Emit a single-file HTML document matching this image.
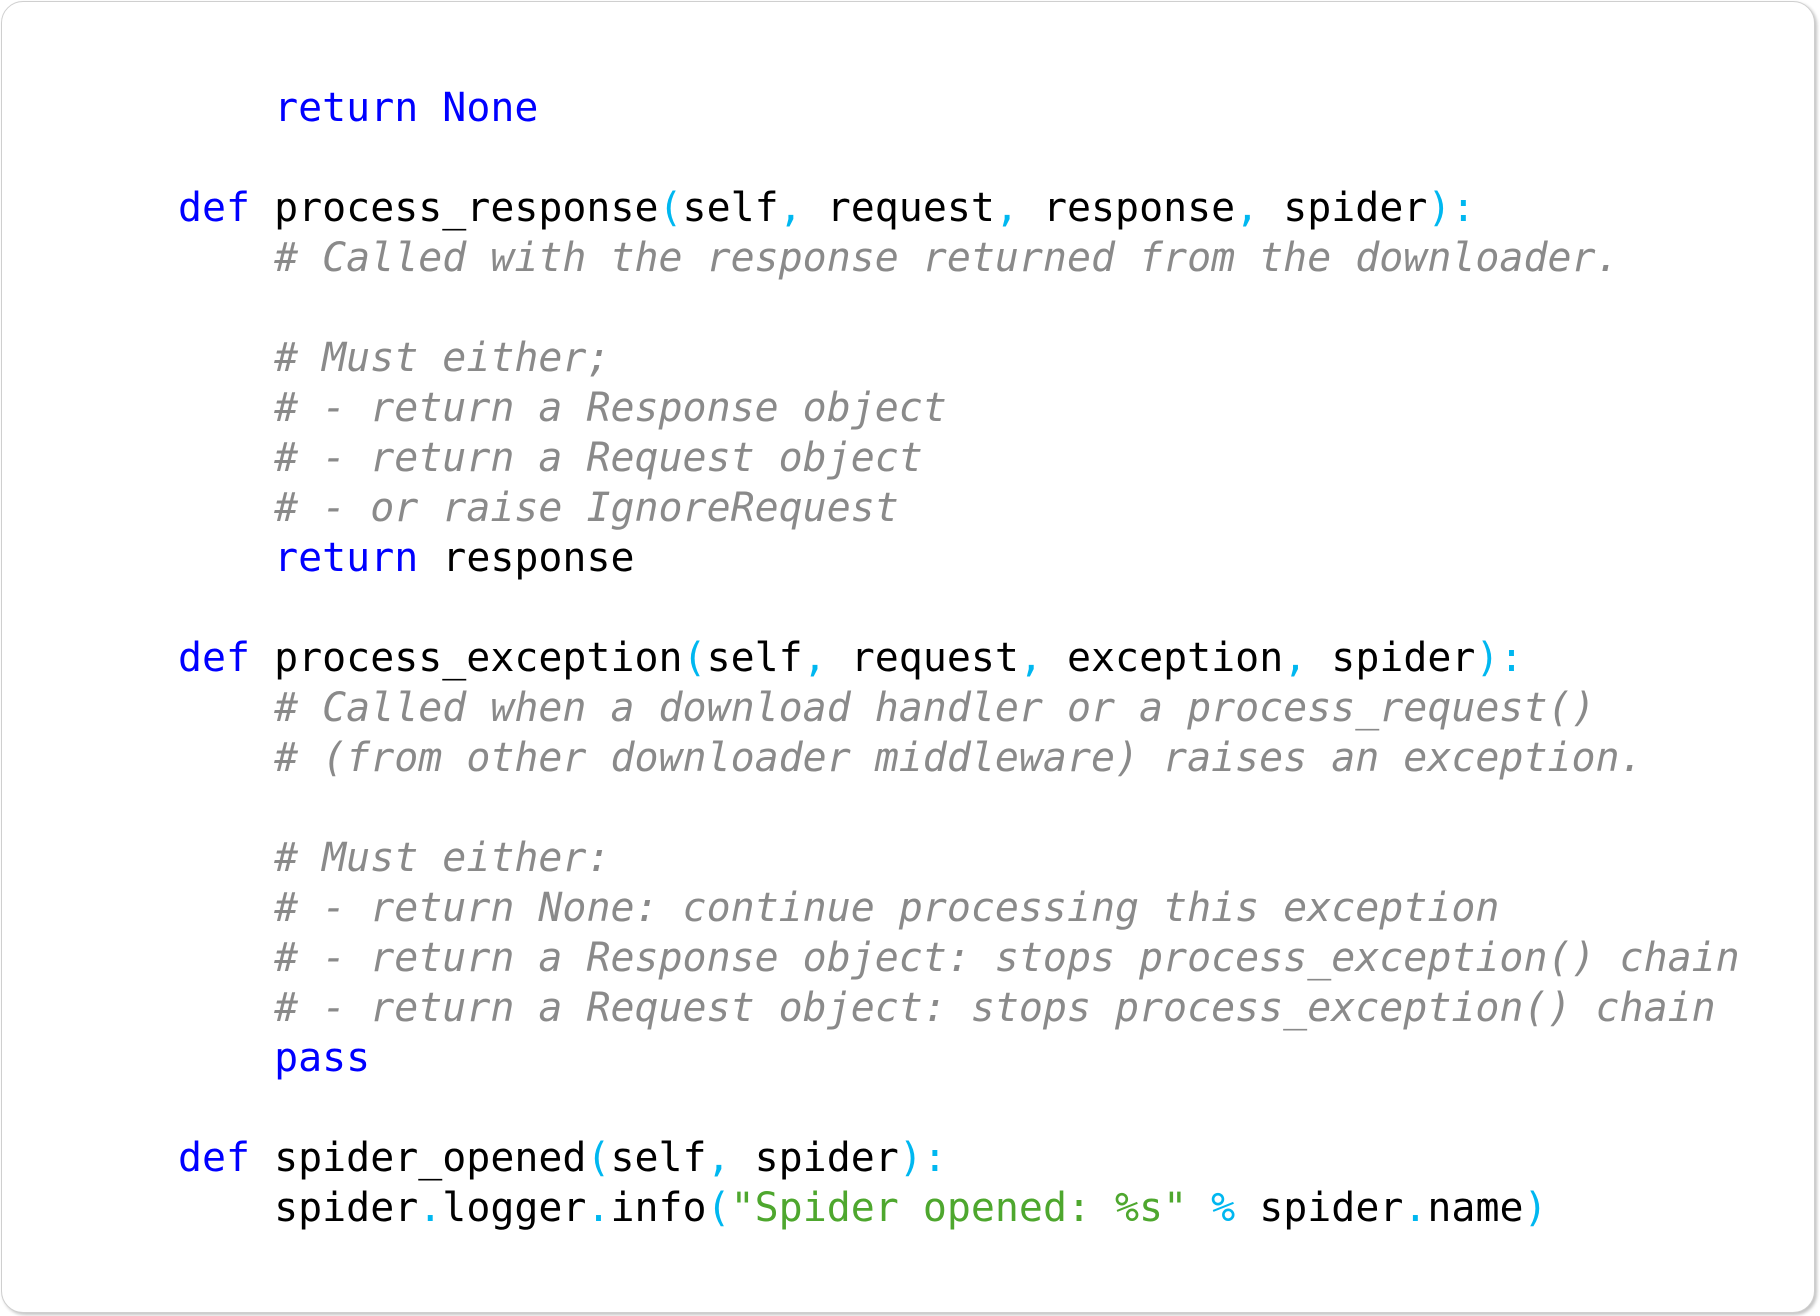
<!DOCTYPE html>
<html><head><meta charset="utf-8"><style>
html,body{margin:0;padding:0;background:#fff;}
body{width:1820px;height:1316px;position:relative;overflow:hidden;}
.card{position:absolute;left:1px;top:1px;width:1812px;height:1310px;border:1px solid #cfcfcf;border-radius:22px;box-shadow:2px 2px 3px #c4c4c4;background:#fff;}
pre{position:absolute;left:178px;top:83px;margin:0;font-family:"DejaVu Sans Mono","Liberation Mono",monospace;font-size:39.92px;line-height:50px;color:#000;}
.k{color:#0000ff}.p{color:#00b7f0}.c{color:#8a8a8a;font-style:italic}.s{color:#4ea72e}
</style></head><body><div class="card"></div>
<pre>    <span class="k">return</span> <span class="k">None</span>

<span class="k">def</span> process_response<span class="p">(</span>self<span class="p">,</span> request<span class="p">,</span> response<span class="p">,</span> spider<span class="p">):</span>
    <span class="c"># Called with the response returned from the downloader.</span>

    <span class="c"># Must either;</span>
    <span class="c"># - return a Response object</span>
    <span class="c"># - return a Request object</span>
    <span class="c"># - or raise IgnoreRequest</span>
    <span class="k">return</span> response

<span class="k">def</span> process_exception<span class="p">(</span>self<span class="p">,</span> request<span class="p">,</span> exception<span class="p">,</span> spider<span class="p">):</span>
    <span class="c"># Called when a download handler or a process_request()</span>
    <span class="c"># (from other downloader middleware) raises an exception.</span>

    <span class="c"># Must either:</span>
    <span class="c"># - return None: continue processing this exception</span>
    <span class="c"># - return a Response object: stops process_exception() chain</span>
    <span class="c"># - return a Request object: stops process_exception() chain</span>
    <span class="k">pass</span>

<span class="k">def</span> spider_opened<span class="p">(</span>self<span class="p">,</span> spider<span class="p">):</span>
    spider<span class="p">.</span>logger<span class="p">.</span>info<span class="p">(</span><span class="s">"Spider opened: %s"</span> <span class="p">%</span> spider<span class="p">.</span>name<span class="p">)</span></pre>
</body></html>
